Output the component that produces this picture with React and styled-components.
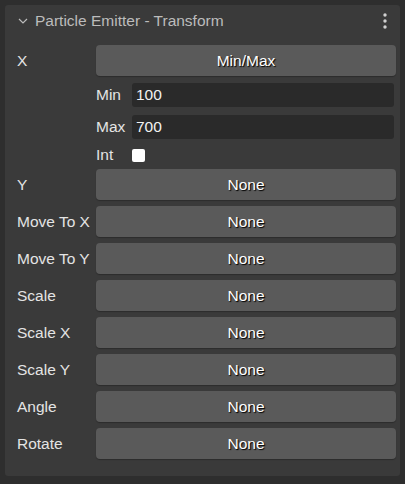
import React from "react";
import styled, { createGlobalStyle } from "styled-components";

const Global = createGlobalStyle`
  html, body { margin: 0; padding: 0; background: #2e2e2e; }
  body { font-family: "Liberation Sans", Arial, sans-serif; }
  * { box-sizing: border-box; }
`;

const Page = styled.div`
  width: 405px;
  height: 484px;
  padding: 5px 5px 8px 5px;
  background: #2e2e2e;
`;

const Panel = styled.div`
  width: 395px;
  height: 471px;
  background: #3a3a3a;
  border-radius: 3px;
  padding: 0 4px 0 12px;
`;

const Header = styled.div`
  display: flex;
  align-items: center;
  height: 32px;
  color: #bcbcbc;
  font-size: 15.5px;
`;

const Chevron = styled.svg`
  width: 10px;
  height: 10px;
  margin: 0 7px 0 1px;
  flex: none;
`;

const Title = styled.span`
  flex: 1;
`;

const Kebab = styled.svg`
  width: 6px;
  height: 18px;
  margin-right: 8px;
`;

const Body = styled.div`
  display: flex;
  flex-direction: column;
  padding-top: 8px;
`;

const Row = styled.div`
  display: flex;
  align-items: center;
  height: 31px;
  margin-bottom: ${(p) => p.$mb ?? 6}px;
`;

const Label = styled.div`
  width: 79px;
  flex: none;
  color: #e4e4e4;
  font-size: 15.5px;
  white-space: nowrap;
`;

const Button = styled.div`
  flex: 1;
  height: 31px;
  background: #5a5a5a;
  border-radius: 4px;
  box-shadow: 0 1px 1px rgba(0, 0, 0, 0.25);
  display: flex;
  align-items: center;
  justify-content: center;
  color: #ffffff;
  font-size: 15.5px;
  text-shadow: 1px 1px 1px #000;
`;

const SubRow = styled.div`
  display: flex;
  align-items: center;
  height: ${(p) => p.$h}px;
  margin-left: 79px;
  margin-bottom: ${(p) => p.$mb}px;
`;

const SubLabel = styled.div`
  width: 36px;
  flex: none;
  color: #e4e4e4;
  font-size: 15.5px;
`;

const Input = styled.div`
  flex: 1;
  height: 24px;
  margin-right: 2px;
  background: #2a2a2a;
  border-radius: 3px;
  display: flex;
  align-items: center;
  padding-left: 4px;
  color: #f2f2f2;
  font-size: 15.5px;
`;

const Check = styled.div`
  width: 13px;
  height: 13px;
  background: #ffffff;
  border-radius: 2px;
`;

const rows = ["Y", "Move To X", "Move To Y", "Scale", "Scale X", "Scale Y", "Angle", "Rotate"];

export default function App() {
  return (
    <>
      <Global />
      <Page>
        <Panel>
          <Header>
            <Chevron viewBox="0 0 10 10">
              <path d="M1 3 L5 7 L9 3" fill="none" stroke="#bcbcbc" strokeWidth="1.2" />
            </Chevron>
            <Title>Particle Emitter - Transform</Title>
            <Kebab viewBox="0 0 6 18">
              <circle cx="3" cy="3" r="1.7" fill="#d0d0d0" />
              <circle cx="3" cy="9" r="1.7" fill="#d0d0d0" />
              <circle cx="3" cy="15" r="1.7" fill="#d0d0d0" />
            </Kebab>
          </Header>
          <Body>
            <Row $mb={7}>
              <Label>X</Label>
              <Button>Min/Max</Button>
            </Row>
            <SubRow $h={24} $mb={8}>
              <SubLabel>Min</SubLabel>
              <Input>100</Input>
            </SubRow>
            <SubRow $h={24} $mb={4}>
              <SubLabel>Max</SubLabel>
              <Input>700</Input>
            </SubRow>
            <SubRow $h={24} $mb={2}>
              <SubLabel>Int</SubLabel>
              <Check />
            </SubRow>
            {rows.map((r) => (
              <Row key={r}>
                <Label>{r}</Label>
                <Button>None</Button>
              </Row>
            ))}
          </Body>
        </Panel>
      </Page>
    </>
  );
}
